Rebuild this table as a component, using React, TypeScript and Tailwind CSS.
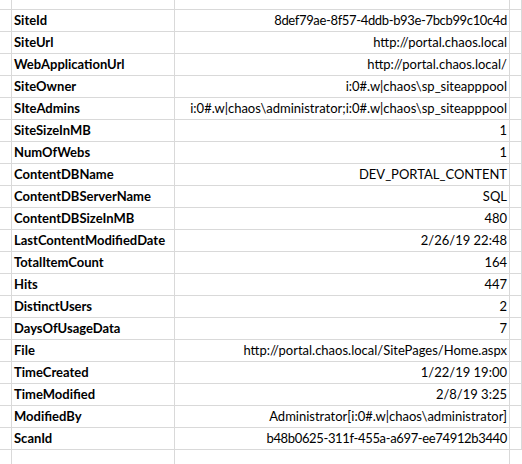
import React from 'react';

const rows: [string, string][] = [
  ['SiteId', '8def79ae-8f57-4ddb-b93e-7bcb99c10c4d'],
  ['SiteUrl', 'http://portal.chaos.local'],
  ['WebApplicationUrl', 'http://portal.chaos.local/'],
  ['SiteOwner', 'i:0#.w|chaos\\sp_siteapppool'],
  ['SIteAdmins', 'i:0#.w|chaos\\administrator;i:0#.w|chaos\\sp_siteapppool'],
  ['SiteSizeInMB', '1'],
  ['NumOfWebs', '1'],
  ['ContentDBName', 'DEV_PORTAL_CONTENT'],
  ['ContentDBServerName', 'SQL'],
  ['ContentDBSizeInMB', '480'],
  ['LastContentModifiedDate', '2/26/19 22:48'],
  ['TotalItemCount', '164'],
  ['Hits', '447'],
  ['DistinctUsers', '2'],
  ['DaysOfUsageData', '7'],
  ['File', 'http://portal.chaos.local/SitePages/Home.aspx'],
  ['TimeCreated', '1/22/19 19:00'],
  ['TimeModified', '2/8/19 3:25'],
  ['ModifiedBy', 'Administrator[i:0#.w|chaos\\administrator]'],
  ['ScanId', 'b48b0625-311f-455a-a697-ee74912b3440'],
];

const cell = 'border-r border-b border-[#d9d9d9] overflow-visible whitespace-nowrap';

const App: React.FC = () => {
  return (
    <div className="w-[522px] h-[464px] overflow-hidden bg-white text-black text-[13px] font-['Lato',sans-serif]">
      {/* partial top row */}
      <div className="grid grid-cols-[12px_163px_335px_12px] h-[10px]">
        <div className={cell}></div>
        <div className={cell}></div>
        <div className={cell}></div>
        <div className={cell}></div>
      </div>
      {rows.map(([label, value]) => {
        const isGuid = label === 'SiteId' || label === 'ScanId';
        return (
          <div key={label} className="grid grid-cols-[12px_163px_335px_12px] h-[22px]">
            <div className={cell}></div>
            <div className={`${cell} flex items-center pl-[2px] pt-[1px] font-bold`}>{label}</div>
            <div
              className={`${cell} flex items-center justify-end pr-[2px] pt-[1px] ${
                isGuid ? 'tracking-[-0.35px]' : ''
              }`}
            >
              {value}
            </div>
            <div className={cell}></div>
          </div>
        );
      })}
      {/* partial bottom row */}
      <div className="grid grid-cols-[12px_163px_335px_12px] h-[14px]">
        <div className="border-r border-[#d9d9d9]"></div>
        <div className="border-r border-[#d9d9d9]"></div>
        <div className="border-r border-[#d9d9d9]"></div>
        <div></div>
      </div>
    </div>
  );
};

export default App;
